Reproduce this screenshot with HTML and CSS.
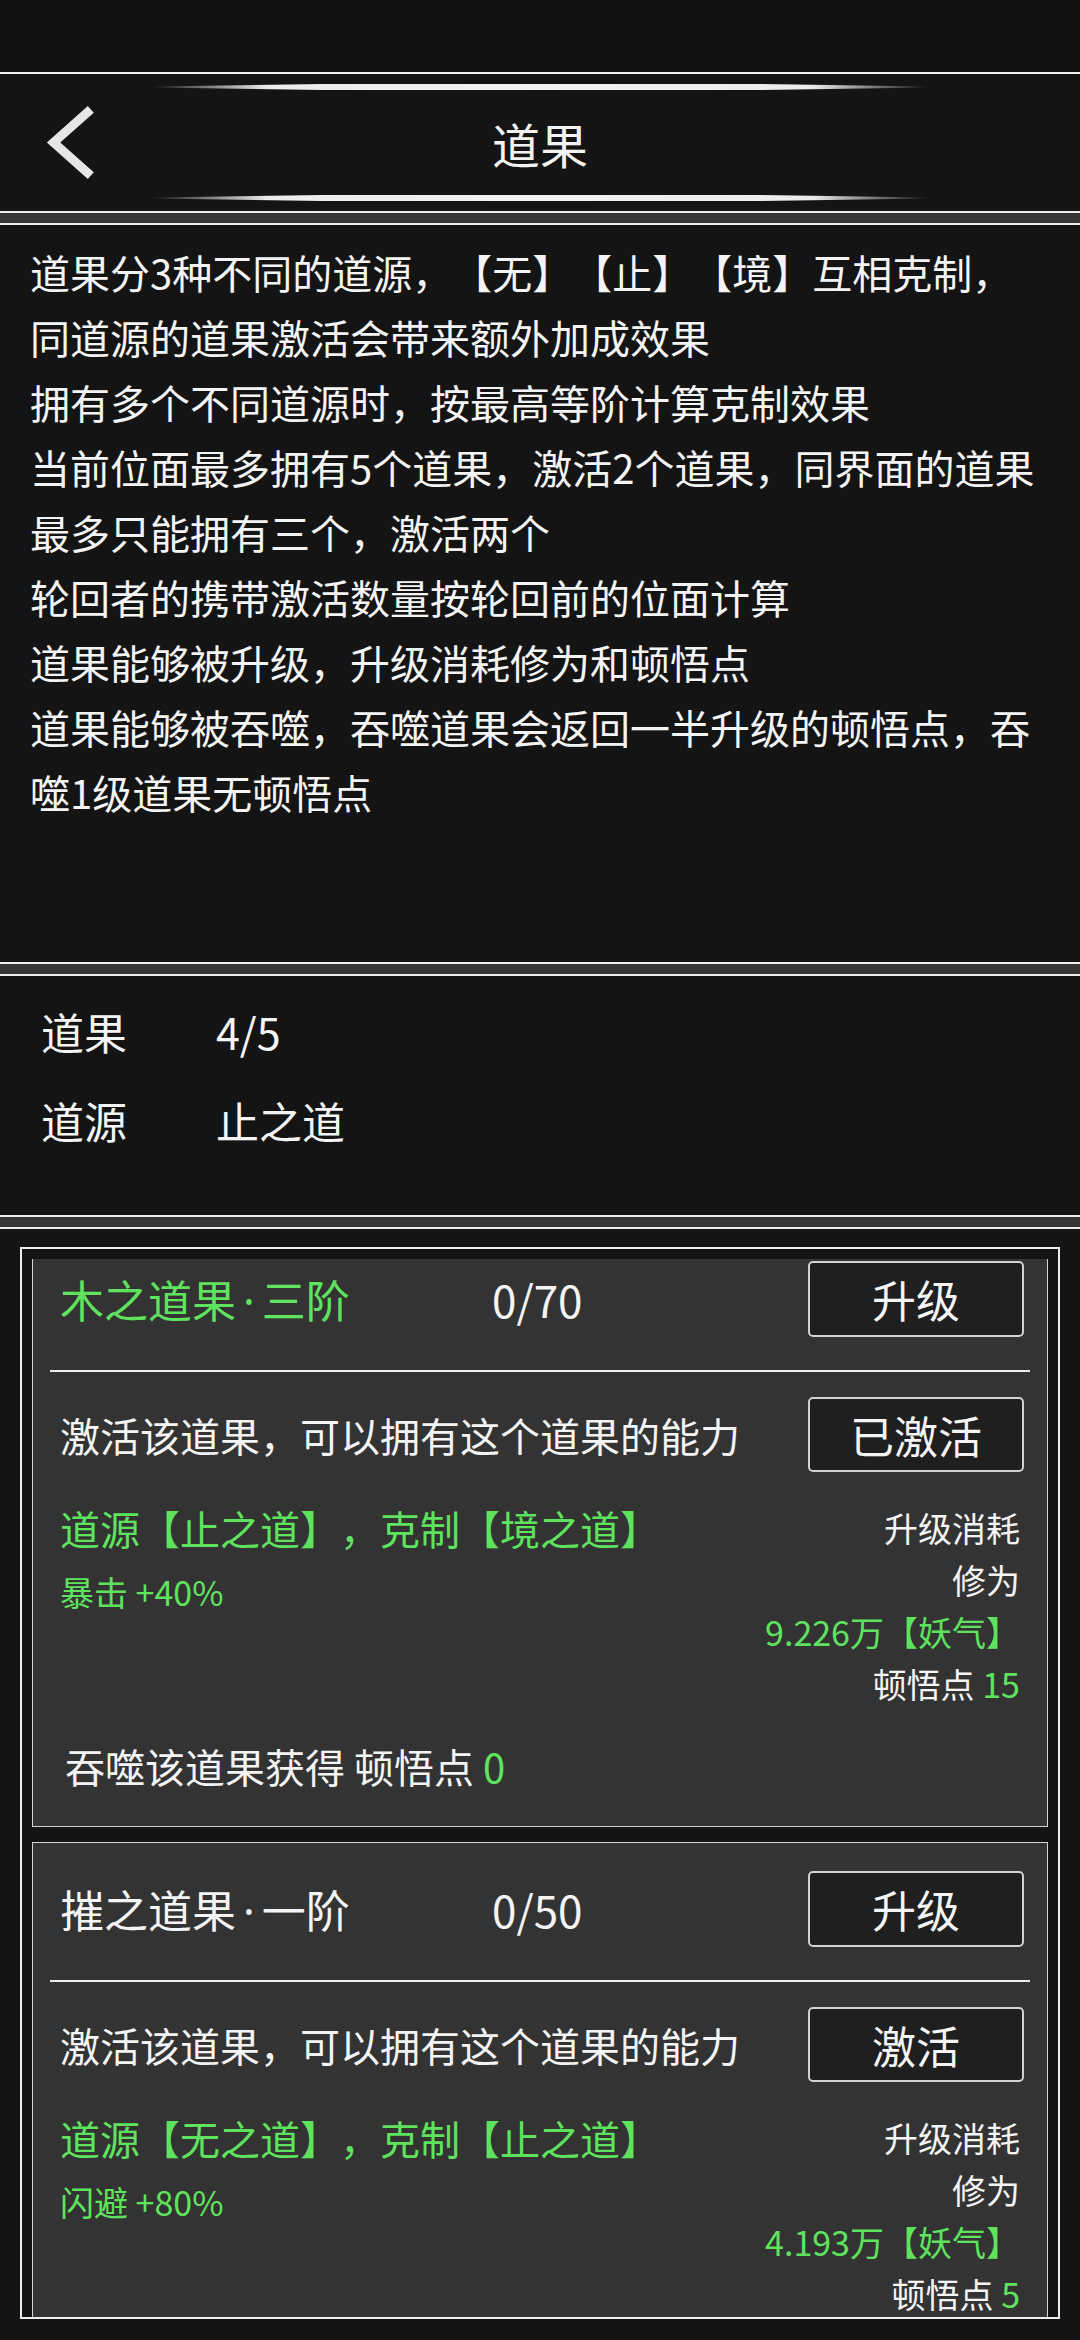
FILE: index.html
```html
<!DOCTYPE html>
<html lang="zh-CN">
<head>
<meta charset="utf-8">
<title>道果</title>
<link rel="stylesheet" href="styles.css">
</head>
<body>
<div class="page">
  <div class="statusbar"></div>

  <header class="panel header">
    <div class="deco-line"></div>
    <div class="header-row">
      <button class="back" aria-label="返回">
        <svg width="60" height="85" viewBox="0 0 60 85"><polyline points="50.8,9.3 13.6,42.5 50.8,75.7" fill="none" stroke="#e6e6e6" stroke-width="9" stroke-linejoin="miter" stroke-linecap="butt"/></svg>
      </button>
      <h1 class="title">道果</h1>
      <span></span>
    </div>
    <div class="deco-line"></div>
  </header>

  <section class="panel intro">
    <p class="intro-text">道果分3种不同的道源，【无】【止】【境】互相克制，<br>同道源的道果激活会带来额外加成效果<br>拥有多个不同道源时，按最高等阶计算克制效果<br>当前位面最多拥有5个道果，激活2个道果，同界面的道果<br>最多只能拥有三个，激活两个<br>轮回者的携带激活数量按轮回前的位面计算<br>道果能够被升级，升级消耗修为和顿悟点<br>道果能够被吞噬，吞噬道果会返回一半升级的顿悟点，吞<br>噬1级道果无顿悟点</p>
  </section>

  <section class="panel stats">
    <div class="stat-row"><span class="stat-label">道果</span><span class="stat-value">4/5</span></div>
    <div class="stat-row"><span class="stat-label">道源</span><span class="stat-value">止之道</span></div>
  </section>

  <section class="panel list">
    <div class="frame">
      <div class="viewport">
        <div class="scroller">
          <article class="card">
            <div class="card-head">
              <span class="card-name green">木之道果<span class="dot">·</span>三阶</span>
              <span class="card-count">0/70</span>
              <button class="btn">升级</button>
            </div>
            <hr class="divider">
            <div class="card-activate">
              <p class="card-desc">激活该道果，可以拥有这个道果的能力</p>
              <button class="btn btn-act">已激活</button>
            </div>
            <div class="card-effects">
              <div class="effects-left">
                <p class="source green">道源【止之道】，克制【境之道】</p>
                <p class="bonus green">暴击 +40%</p>
              </div>
              <div class="cost">
                <p>升级消耗</p>
                <p>修为</p>
                <p class="green">9.226万【妖气】</p>
                <p>顿悟点 <span class="green">15</span></p>
              </div>
            </div>
            <p class="swallow">吞噬该道果获得 顿悟点 <span class="green">0</span></p>
          </article>

          <article class="card">
            <div class="card-head">
              <span class="card-name">摧之道果<span class="dot">·</span>一阶</span>
              <span class="card-count">0/50</span>
              <button class="btn">升级</button>
            </div>
            <hr class="divider">
            <div class="card-activate">
              <p class="card-desc">激活该道果，可以拥有这个道果的能力</p>
              <button class="btn btn-act">激活</button>
            </div>
            <div class="card-effects">
              <div class="effects-left">
                <p class="source green">道源【无之道】，克制【止之道】</p>
                <p class="bonus green">闪避 +80%</p>
              </div>
              <div class="cost">
                <p>升级消耗</p>
                <p>修为</p>
                <p class="green">4.193万【妖气】</p>
                <p>顿悟点 <span class="green">5</span></p>
              </div>
            </div>
          </article>
        </div>
      </div>
    </div>
  </section>
</div>
</body>
</html>
```

FILE: styles.css
```css
* {
  box-sizing: border-box;
  margin: 0;
  padding: 0;
}

html,
body {
  background: #111111;
}

body {
  width: 1080px;
  height: 2340px;
  overflow: hidden;
  font-family: "Noto Sans CJK SC", "Noto Sans", sans-serif;
  color: #f4f4f4;
  text-spacing-trim: space-all;
}

.page {
  display: flex;
  flex-direction: column;
  height: 2340px;
  background: #363636;
}

.statusbar {
  flex: none;
  height: 72px;
  background: #111111;
}

.panel {
  flex: none;
  background: #141414;
  border-top: 2px solid #eeeeee;
  border-bottom: 2px solid #eeeeee;
}

.panel + .panel {
  margin-top: 10px;
}

.green {
  color: #5fe35f;
}

/* header */
.header {
  height: 141px;
  padding: 10px 0;
  display: flex;
  flex-direction: column;
}

.deco-line {
  width: 778px;
  height: 6px;
  margin: 0 auto;
  background: linear-gradient(to right, rgba(238, 238, 238, 0) 0%, #ececec 15%, #f2f2f2 50%, #ececec 85%, rgba(238, 238, 238, 0) 100%);
  clip-path: polygon(0 40%, 22% 0, 78% 0, 100% 40%, 100% 60%, 78% 100%, 22% 100%, 0 60%);
}

.header-row {
  flex: 1;
  display: grid;
  grid-template-columns: 1fr auto 1fr;
  align-items: center;
}

.back {
  justify-self: start;
  margin-left: 40px;
  width: 60px;
  height: 85px;
  background: none;
  border: 0;
  display: block;
}

.back svg {
  display: block;
}

.title {
  font-size: 48px;
  font-weight: 400;
  color: #f2f2f2;
  line-height: 1;
}

/* intro */
.intro {
  height: 741px;
  padding: 15px 30px 0;
}

.intro-text {
  font-size: 40px;
  line-height: 65px;
  white-space: nowrap;
}

/* stats */
.stats {
  height: 243px;
  padding: 11px 0 0 41px;
}

.stat-row {
  display: grid;
  grid-template-columns: 175px auto;
  font-size: 43px;
  line-height: 89px;
}

/* list */
.list {
  flex: 1;
  border-bottom: none;
  padding: 18px 20px 0;
}

.frame {
  height: 1072px;
  border: 2px solid #eeeeee;
  padding: 10px 10px 0;
}

.viewport {
  height: 1058px;
  overflow: hidden;
}

.scroller {
  margin-top: -27px;
}

.card {
  background: #333333;
  border: 1px solid #d4d4d4;
  padding: 28px 23px 30px 27px;
}

.card + .card {
  margin-top: 15px;
}

.card-head {
  display: grid;
  grid-template-columns: 432px 1fr 216px;
  align-items: center;
  height: 76px;
}

.card-name,
.card-count {
  font-size: 44px;
  white-space: nowrap;
}

.dot {
  font-family: "Noto Sans", sans-serif;
  margin: 0 7px;
}

.btn {
  width: 216px;
  height: 76px;
  border: 2px solid #d2d2d2;
  border-radius: 5px;
  background: #1f1f1f;
  color: #f4f4f4;
  font-family: "Noto Sans CJK SC", "Noto Sans", sans-serif;
  font-size: 44px;
  line-height: 1;
}

.btn-act {
  height: 75px;
}

.divider {
  border: 0;
  height: 2px;
  background: #eeeeee;
  margin: 33px -6px 0 -10px;
}

.card-activate {
  display: flex;
  justify-content: space-between;
  align-items: center;
  margin-top: 25px;
  height: 75px;
}

.card-desc {
  font-size: 40px;
  white-space: nowrap;
}

.card-effects {
  display: flex;
  justify-content: space-between;
  margin-top: 30px;
}

.source {
  font-size: 40px;
  line-height: 52px;
  white-space: nowrap;
}

.bonus {
  font-size: 34px;
  line-height: 52px;
  margin-top: 12px;
  white-space: nowrap;
}

.cost {
  text-align: right;
  font-size: 34px;
  line-height: 52px;
  margin-right: 4px;
  white-space: nowrap;
}

.swallow {
  font-size: 40px;
  line-height: 60px;
  margin-top: 26px;
  padding-left: 5px;
}
```
